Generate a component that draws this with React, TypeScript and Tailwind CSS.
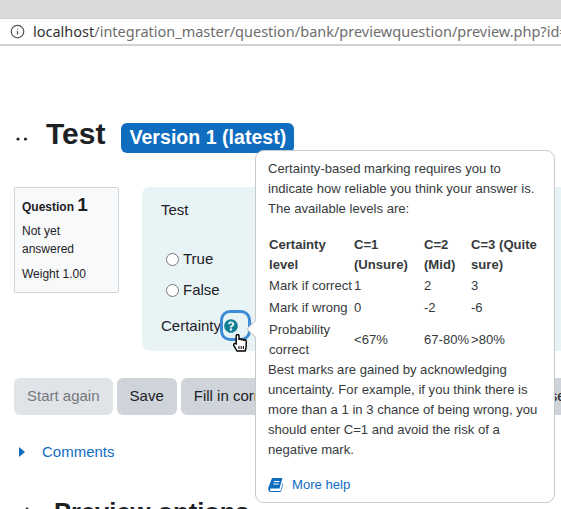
import React from "react";
import { FaQuestionCircle } from "react-icons/fa";
import { Info } from "lucide-react";

type LevelRow = {
  label: string;
  values: string[];
  rowClass: string;
};

const levelRows: LevelRow[] = [
  { label: "Mark if correct", values: ["1", "2", "3"], rowClass: "h-[22px]" },
  { label: "Mark if wrong", values: ["0", "-2", "-6"], rowClass: "h-[22px]" },
  { label: "Probability correct", values: ["<67%", "67-80%", ">80%"], rowClass: "h-[42px]" },
];

const BookIcon: React.FC = () => (
  <svg width="15" height="14" viewBox="0 0 15 14" className="shrink-0">
    <path
      className="fill-[#0f6cbf]"
      d="M4 0h10.5l-3 10.5H3.2Q1.6 10.5 2 12t2 1h8.5l2.5-9 .5 1-2.5 8.5q-.2.5-1 .5H3Q.6 14 .3 11.5 0 10 .8 8.5z"
    />
    <path className="stroke-white" strokeWidth="1" d="M6 3.5h5.5M5.3 6h5.5" />
  </svg>
);

const HandCursor: React.FC = () => (
  <svg width="15" height="18" viewBox="0 0 15 18" className="absolute left-[233px] top-[334px] fill-white stroke-black" strokeWidth="1.4">
    <path d="M3.2 9.8V1.9a1.4 1.4 0 0 1 2.8 0V6a1.2 1.2 0 0 1 2.4 0v.4a1.2 1.2 0 0 1 2.4 0v.5a1.2 1.2 0 0 1 2.4 0V12q0 2-1 5H4L.9 11.6q-.6-1.2.3-1.9.9-.6 2 .1z" />
    <path strokeWidth="1" d="M6 12v3M8.2 12v3M10.4 12v3" />
  </svg>
);

const BrowserBar: React.FC = () => (
  <header>
    <div className="h-[18px] bg-[#d9d9d9]" />
    <div className="h-[28px] flex items-center gap-2 pl-[10px] bg-white border-t border-b-2 border-[#d2d2d2] overflow-hidden whitespace-nowrap font-['Noto_Sans',sans-serif] text-[14.5px]">
      <Info size={15} strokeWidth={2} className="text-[#555] shrink-0" />
      <span className="text-[#6e6e6e]">
        <span className="text-[#333]">localhost</span>/integration_master/question/bank/previewquestion/preview.php?id=
      </span>
    </div>
  </header>
);

const HelpPopover: React.FC = () => (
  <div className="absolute left-[255px] top-[150px] w-[300px] h-[353px] bg-white border border-[#c9c9c9] rounded-[9px] px-3 pt-[8px] text-[13.1px] leading-[20px] text-[#373a3c]">
    <div className="absolute -left-[7px] top-[172px] w-3 h-3 rotate-45 bg-white border-l border-b border-[#c9c9c9]" />
    <p>
      Certainty-based marking requires you to indicate how reliable you think your answer is. The available levels are:
    </p>
    <table className="mt-4 ml-px table-fixed w-[274px] border-collapse">
      <colgroup>
        <col className="w-[85px]" />
        <col className="w-[70px]" />
        <col className="w-[47px]" />
        <col className="w-[72px]" />
      </colgroup>
      <thead>
        <tr className="font-bold text-left align-top">
          <th>Certainty level</th>
          <th>C=1 (Unsure)</th>
          <th>C=2 (Mid)</th>
          <th>C=3 (Quite sure)</th>
        </tr>
      </thead>
      <tbody>
        {levelRows.map((row) => (
          <tr key={row.label} className={row.rowClass}>
            <td>{row.label}</td>
            {row.values.map((value) => (
              <td key={value} className="whitespace-nowrap">
                {value}
              </td>
            ))}
          </tr>
        ))}
      </tbody>
    </table>
    <p className="-mt-px">
      Best marks are gained by acknowledging uncertainty. For example, if you think there is more than a 1 in 3 chance of being wrong, you should enter C=1 and avoid the risk of a negative mark.
    </p>
    <a className="mt-[15px] flex items-center gap-[9px] text-[#0f6cbf]">
      <BookIcon />
      More help
    </a>
  </div>
);

const App: React.FC = () => {
  return (
    <div className="relative w-[561px] h-[509px] overflow-hidden bg-white font-['Liberation_Sans',sans-serif] text-[#1d2125]">
      <BrowserBar />

      <main className="pl-[14px]">
        <div className="mt-[73px] h-[34px] flex items-center">
          <svg width="12" height="4" viewBox="0 0 12 4" className="ml-[2px] mt-[6px] fill-[#1d2125]">
            <circle cx="2" cy="2" r="1.6" />
            <circle cx="9.5" cy="2" r="1.6" />
          </svg>
          <h2 className="ml-[18px] -mt-[5px] text-[30px] font-bold">Test</h2>
          <span className="ml-[16px] mt-[3px] h-[30px] px-2 flex items-center rounded-[6px] bg-[#0f6cbf] text-white text-[19.6px] font-bold whitespace-nowrap">
            Version 1 (latest)
          </span>
        </div>

        <div className="mt-[34px] flex gap-[23px]">
          <aside className="w-[105px] h-[106px] shrink-0 bg-[#f8f9fa] border border-[#ced4da] rounded-[2px] pl-[7px] pr-2 pt-[3px] text-[12px] leading-[18px]">
            <h3 className="font-bold leading-[27px]">
              Question <span className="text-[19px]">1</span>
            </h3>
            <p className="mt-[1px]">Not yet answered</p>
            <p className="mt-[7px]">Weight 1.00</p>
          </aside>

          <section className="w-[450px] h-[164px] shrink-0 bg-[#e7f3f5] rounded-l-[8px] pl-[19px] pt-[12px] text-[15px] leading-[22px]">
            <p>Test</p>
            <label className="mt-[27px] ml-[5px] flex items-center gap-[4px]">
              <input type="radio" name="answer" className="w-[13px] h-[13px]" />
              True
            </label>
            <label className="mt-[9px] ml-[5px] flex items-center gap-[4px]">
              <input type="radio" name="answer" className="w-[13px] h-[13px]" />
              False
            </label>
            <div className="mt-[14px] flex items-center">
              Certainty
              <span className="relative ml-[3px] w-[14px] h-[14px] text-[#0f7e92]">
                <FaQuestionCircle size={14} />
                <span className="absolute -left-[4px] -top-[9px] w-[31px] h-[31px] border-[3px] border-[#3d8bd4] rounded-[10px]" />
              </span>
              <span className="ml-[11px] text-[12px]">:</span>
            </div>
          </section>
        </div>

        <div className="mt-[27px] flex gap-1 text-[15px] whitespace-nowrap">
          <button className="h-[37px] px-[13px] rounded-[6px] bg-[#e0e3e7] text-[#74787c]">Start again</button>
          <button className="h-[37px] px-[13px] rounded-[6px] bg-[#ced4da]">Save</button>
          <button className="h-[37px] px-[13px] rounded-[6px] bg-[#ced4da] shrink-0">Fill in correct responses</button>
          <button className="h-[37px] px-[13px] rounded-[6px] bg-[#ced4da] shrink-0">Submit and finish</button>
          <button className="h-[37px] px-[13px] rounded-[6px] bg-[#ced4da] shrink-0">Close preview</button>
        </div>

        <div className="mt-[26px] flex items-center text-[15px] text-[#0f6cbf]">
          <svg width="6" height="10" viewBox="0 0 6 10" className="ml-[5px] fill-[#0f6cbf]">
            <path d="M0 0l6 5-6 5z" />
          </svg>
          <span className="ml-[17px]">Comments</span>
        </div>

        <div className="mt-[33px] flex items-center">
          <svg width="10" height="6" viewBox="0 0 10 6" className="ml-[8px] -mt-[4px] fill-[#1d2125]">
            <path d="M5 0l5 6H0z" />
          </svg>
          <h3 className="ml-[22px] text-[25.5px] leading-[30px] font-bold whitespace-nowrap">Preview options</h3>
        </div>
      </main>

      <HelpPopover />

      <HandCursor />
    </div>
  );
};

export default App;
